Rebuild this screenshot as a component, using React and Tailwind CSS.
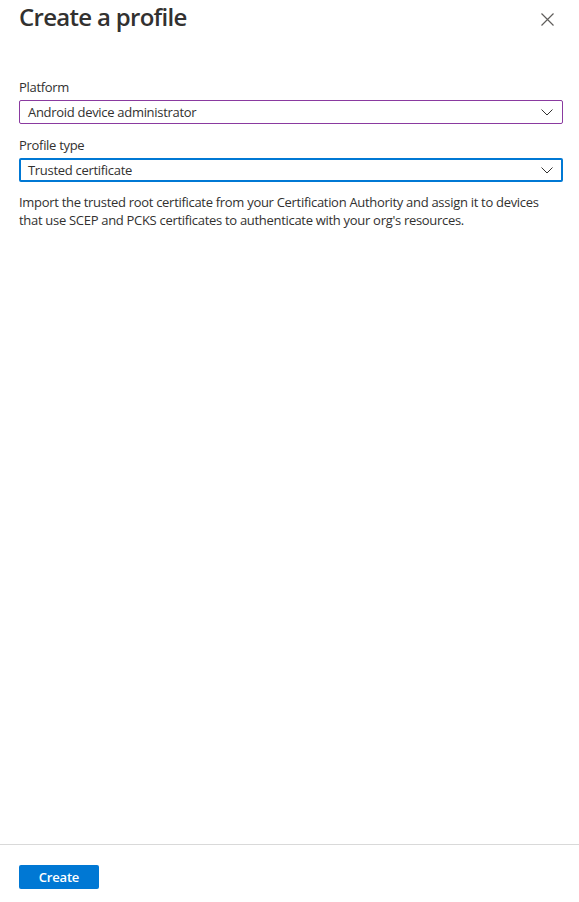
import React from "react";

function Chevron() {
  return (
    <svg width="12" height="7" viewBox="0 0 12 7" fill="none" className="shrink-0">
      <path d="M0.5 0.5 L6 6 L11.5 0.5" stroke="#323130" strokeWidth="1" />
    </svg>
  );
}

function Select({ value, focused }) {
  return (
    <div
      className={
        focused
          ? "flex h-[24px] items-center justify-between rounded-[2px] border-2 border-[#0078d4] pl-[7px] pr-[8px]"
          : "flex h-[24px] items-center justify-between rounded-[2px] border border-[#8a3aa0] pl-[8px] pr-[9px]"
      }
    >
      <span className="text-[13px] leading-[18px] tracking-[-0.3px] text-[#323130]">{value}</span>
      <Chevron />
    </div>
  );
}

export default function App() {
  return (
    <div
      className="flex h-[902px] w-[579px] flex-col bg-white text-[#323130]"
      style={{ fontFamily: '"Open Sans", "Noto Sans", sans-serif' }}
    >
      <div className="flex-1 pl-[19px] pr-[16px]">
        <div className="flex items-start justify-between pt-[1px]">
          <h1 className="text-[24px] font-semibold leading-[32px] tracking-[-0.7px] text-[#323130]">Create a profile</h1>
          <button className="mr-[8px] mt-[11px] p-[1px]" aria-label="Close">
            <svg width="13" height="13" viewBox="0 0 13 13" fill="none">
              <path d="M0.5 0.5 L12.5 12.5 M12.5 0.5 L0.5 12.5" stroke="#605e5c" strokeWidth="1.2" />
            </svg>
          </button>
        </div>

        <div className="mt-[45px] flex flex-col">
          <label className="text-[13px] leading-[18px] tracking-[-0.3px]">Platform</label>
          <div className="mt-[4px]">
            <Select value="Android device administrator" />
          </div>
          <label className="mt-[12px] text-[13px] leading-[18px] tracking-[-0.3px]">Profile type</label>
          <div className="mt-[4px]">
            <Select value="Trusted certificate" focused />
          </div>
          <p className="mt-[11px] w-[524px] text-[13px] leading-[18px] tracking-[-0.3px]">
            Import the trusted root certificate from your Certification Authority and assign it to devices
            that use SCEP and PCKS certificates to authenticate with your org's resources.
          </p>
        </div>
      </div>

      <div className="border-t border-[#d9d9d9] px-[19px] pb-[13px] pt-[20px]">
        <button className="flex h-[24px] w-[80px] items-center justify-center rounded-[2px] bg-[#0078d4] text-[13px] font-semibold leading-[18px] tracking-[-0.2px] text-white">
          Create
        </button>
      </div>
    </div>
  );
}
